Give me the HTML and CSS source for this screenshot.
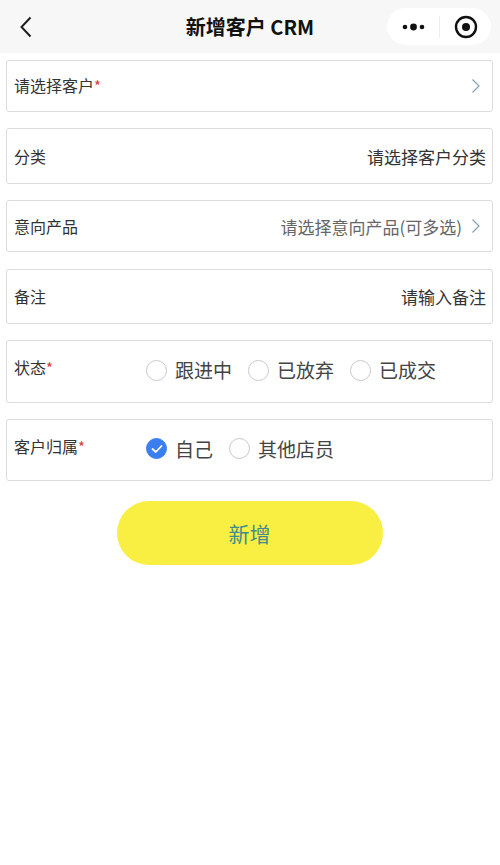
FILE: index.html
```html
<!DOCTYPE html>
<html lang="zh">
<head>
<meta charset="utf-8">
<title>新增客户 CRM</title>
<link rel="stylesheet" href="styles.css">
</head>
<body>
<header class="nav">
  <svg class="back" width="14" height="22" viewBox="0 0 14 22"><path d="M11.5 1.5 L2.5 11 L11.5 20.5" fill="none" stroke="#1f1f1f" stroke-width="2"/></svg>
  <h1 class="title">新增客户 CRM</h1>
  <div class="capsule">
    <div class="cap-more">
      <svg width="24" height="10" viewBox="0 0 24 10"><circle cx="3" cy="5" r="2.3" fill="#111"/><circle cx="11.5" cy="5" r="3.4" fill="#111"/><circle cx="20" cy="5" r="2.3" fill="#111"/></svg>
    </div>
    <div class="cap-sep"></div>
    <div class="cap-close">
      <svg width="26" height="26" viewBox="0 0 26 26"><circle cx="13" cy="13" r="10" fill="none" stroke="#111" stroke-width="2.4"/><circle cx="13" cy="13" r="4" fill="#111"/></svg>
    </div>
  </div>
</header>

<main class="form">
  <div class="card card-s">
    <span class="label">请选择客户<span class="req">*</span></span>
    <span class="right"><svg class="chev" width="10" height="16" viewBox="0 0 10 16"><path d="M1.5 1.5 L8 8 L1.5 14.5" fill="none" stroke="#86a0b4" stroke-width="1.2"/></svg></span>
  </div>
  <div class="card card-m">
    <span class="label">分类</span>
    <span class="right value">请选择客户分类</span>
  </div>
  <div class="card card-s">
    <span class="label">意向产品</span>
    <span class="right"><span class="value muted">请选择意向产品(可多选)</span><svg class="chev" width="10" height="16" viewBox="0 0 10 16"><path d="M1.5 1.5 L8 8 L1.5 14.5" fill="none" stroke="#86a0b4" stroke-width="1.2"/></svg></span>
  </div>
  <div class="card card-m card-note">
    <span class="label">备注</span>
    <span class="right value">请输入备注</span>
  </div>
  <div class="card card-r">
    <span class="label label-col">状态<span class="req">*</span></span>
    <div class="radios">
      <span class="radio"><span class="dot"></span>跟进中</span>
      <span class="radio"><span class="dot"></span>已放弃</span>
      <span class="radio"><span class="dot"></span>已成交</span>
    </div>
  </div>
  <div class="card card-r card-owner">
    <span class="label label-col">客户归属<span class="req">*</span></span>
    <div class="radios">
      <span class="radio"><span class="dot on"><svg width="12" height="10" viewBox="0 0 12 10"><path d="M1.5 5 L4.8 8 L10.5 2" fill="none" stroke="#fff" stroke-width="1.8" stroke-linecap="round" stroke-linejoin="round"/></svg></span>自己</span>
      <span class="radio"><span class="dot"></span>其他店员</span>
    </div>
  </div>
  <div class="btn-wrap">
    <button class="btn">新增</button>
  </div>
</main>
</body>
</html>
```

FILE: styles.css
```css
* { box-sizing: border-box; }
html, body { margin: 0; padding: 0; background: #fff; }
body {
  font-family: "Noto Sans CJK SC", "Noto Sans", sans-serif;
  color: #333;
  width: 500px;
  height: 865px;
}
.nav {
  height: 53px;
  background: #f7f7f7;
  display: flex;
  align-items: center;
  position: relative;
}
.back { position: absolute; left: 19px; top: 16px; }
.title {
  margin: 0;
  width: 100%;
  text-align: center;
  font-size: 20px;
  font-weight: 700;
  color: #111;
  line-height: 53px;
}
.capsule {
  position: absolute;
  left: 387px;
  top: 8px;
  width: 104px;
  height: 37px;
  background: #fff;
  border-radius: 19px;
  display: flex;
  align-items: center;
}
.cap-more { width: 52px; display: flex; justify-content: center; padding-left: 2px; padding-top: 1px; }
.cap-sep { width: 1px; height: 22px; background: #eee; }
.cap-close { flex: 1; display: flex; justify-content: center; padding-left: 1px; }

.form {
  padding: 7px 7px 0 6px;
  display: flex;
  flex-direction: column;
  gap: 16px;
}
.card {
  border: 1px solid #dcdcdc;
  border-radius: 3px;
  display: flex;
  align-items: center;
  padding: 0 6px 0 7px;
  font-size: 16px;
}
.card-s { height: 52px; }
.card-m { height: 56px; }
.card-r { height: 63px; }
.card-note { height: 55px; margin-top: 1px; }
.card-owner { height: 62px; }
.label { color: #333; line-height: 20px; margin-bottom: 1px; }
.req { color: #e0393e; font-size: 15px; }
.right {
  margin-left: auto;
  display: flex;
  align-items: center;
}
.value { font-size: 17px; color: #333; }
.muted { color: #666; }
.chev { margin-left: 9px; margin-right: 5px; }

.label-col { width: 132px; flex: none; margin-bottom: 8px; }
.radios { display: flex; align-items: center; margin-bottom: 3px; }
.radio {
  display: flex;
  align-items: center;
  font-size: 19px;
  color: #444;
  margin-right: 16px;
  line-height: 28px;
}
.dot {
  width: 21px;
  height: 21px;
  border-radius: 50%;
  border: 1px solid #c8c8c8;
  margin-right: 8px;
  display: flex;
  align-items: center;
  justify-content: center;
  background: #fff;
}
.dot.on { background: #3b7ef0; border-color: #3b7ef0; }

.btn-wrap { display: flex; justify-content: center; margin-top: 4px; }
.btn {
  width: 266px;
  height: 64px;
  border: none;
  border-radius: 32px;
  background: #f9ef43;
  color: #3f8c90;
  font-family: "Noto Sans CJK SC", sans-serif;
  font-size: 21px;
  padding: 0;
}
```
